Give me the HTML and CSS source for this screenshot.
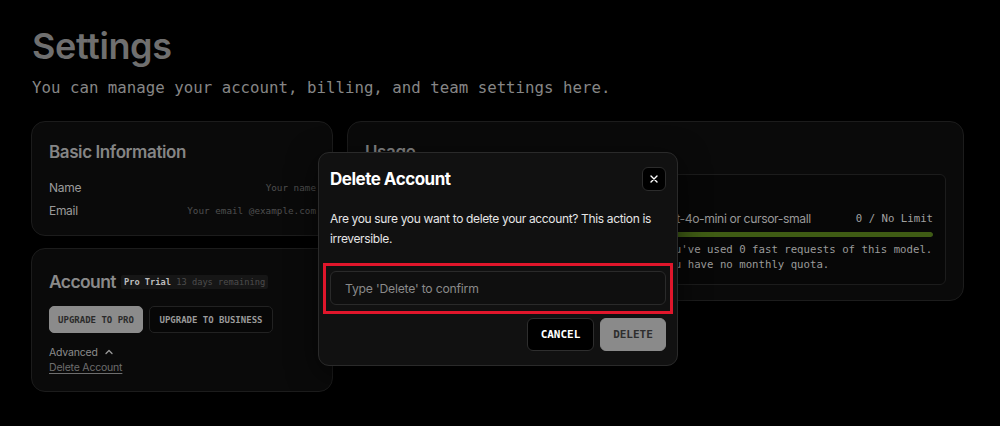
FILE: index.html
```html
<!DOCTYPE html>
<html lang="en">
<head>
<meta charset="utf-8">
<title>Settings</title>
<link rel="stylesheet" href="styles.css">
</head>
<body>
<main class="page">
  <header class="page-head">
    <h1 class="page-title">Settings</h1>
    <p class="page-sub">You can manage your account, billing, and team settings here.</p>
  </header>

  <div class="layout">
    <div class="col-left">
      <section class="card card-basic">
        <h2 class="card-title">Basic Information</h2>
        <div class="field-row">
          <span class="field-label">Name</span>
          <span class="field-value">Your name</span>
        </div>
        <div class="field-row">
          <span class="field-label">Email</span>
          <span class="field-value">Your email @example.com</span>
        </div>
      </section>

      <section class="card card-account">
        <div class="account-head">
          <h2 class="card-title account-title">Account</h2>
          <span class="badge"><b>Pro Trial</b> 13 days remaining</span>
        </div>
        <div class="btn-row">
          <button class="btn btn-light">UPGRADE TO PRO</button>
          <button class="btn btn-dark">UPGRADE TO BUSINESS</button>
        </div>
        <div class="advanced">
          <span>Advanced</span>
          <svg width="10" height="10" viewBox="0 0 10 10"><path d="M2 6.5 L5 3.5 L8 6.5" fill="none" stroke="#9a9a9a" stroke-width="1.3" stroke-linecap="round" stroke-linejoin="round"/></svg>
        </div>
        <a class="delete-link" href="#">Delete Account</a>
      </section>
    </div>

    <section class="card card-usage">
      <h2 class="card-title">Usage</h2>
      <div class="usage-box">
        <div class="usage-col">
          <div class="usage-row">
            <span class="usage-name">Premium models</span>
            <span class="usage-count">0 / 50</span>
          </div>
          <div class="bar"><div class="bar-fill" style="width:0%"></div></div>
          <p class="usage-note">You've used 0 requests out of your 50 fast requests.</p>
        </div>
        <div class="usage-col">
          <div class="usage-row">
            <span class="usage-name">gpt-4o-mini or cursor-small</span>
            <span class="usage-count">0 / No Limit</span>
          </div>
          <div class="bar"><div class="bar-fill" style="width:100%"></div></div>
          <p class="usage-note">You've used 0 fast requests of this model.<br>You have no monthly quota.</p>
        </div>
      </div>
    </section>
  </div>
</main>

<div class="overlay">
  <div class="modal" role="dialog" aria-labelledby="dlg-title">
    <div class="modal-head">
      <h3 id="dlg-title" class="modal-title">Delete Account</h3>
      <button class="close-btn" aria-label="Close">
        <svg width="10" height="10" viewBox="0 0 10 10"><path d="M2 2 L8 8 M8 2 L2 8" stroke="#ffffff" stroke-width="1.4" stroke-linecap="round"/></svg>
      </button>
    </div>
    <p class="modal-text">Are you sure you want to delete your account? This action is irreversible.</p>
    <div class="highlight">
      <input class="confirm-input" type="text" placeholder="Type 'Delete' to confirm">
    </div>
    <div class="modal-actions">
      <button class="mbtn mbtn-cancel">CANCEL</button>
      <button class="mbtn mbtn-delete">DELETE</button>
    </div>
  </div>
</div>
</body>
</html>
```

FILE: styles.css
```css
* { box-sizing: border-box; }

html, body {
  margin: 0;
  padding: 0;
  background: #000;
  height: 100%;
}

body {
  font-family: Inter, "Liberation Sans", sans-serif;
  color: #cfcfcf;
  overflow: hidden;
  position: relative;
}

.page {
  padding: 23px 36px 0 31px;
}

.page-head {
  padding-left: 1px;
}

.page-title {
  margin: 0;
  font-size: 36px;
  line-height: 46px;
  font-weight: 600;
  letter-spacing: -0.4px;
  color: #6f6f6f;
}

.page-sub {
  margin: 9px 0 0;
  font-family: "DejaVu Sans Mono", "Liberation Mono", monospace;
  font-size: 15.75px;
  line-height: 20px;
  color: #868686;
}

.layout {
  display: grid;
  grid-template-columns: 302px 1fr;
  gap: 14px;
  margin-top: 23px;
  align-items: start;
}

.col-left {
  display: flex;
  flex-direction: column;
  gap: 12px;
}

.card {
  background: #0a0a0a;
  border: 1px solid #1c1c1c;
  border-radius: 14px;
}

.card-title {
  margin: 0;
  font-size: 17px;
  line-height: 22px;
  font-weight: 600;
  letter-spacing: -0.4px;
  color: #858585;
}

.card-basic {
  padding: 19px 16px 16px 17px;
}

.field-row {
  display: flex;
  justify-content: space-between;
  align-items: center;
  height: 18px;
  margin-top: 5px;
}

.card-basic .card-title + .field-row {
  margin-top: 15px;
}

.field-label {
  font-size: 12px;
  color: #9a9a9a;
  letter-spacing: -0.3px;
}

.field-value {
  font-family: "DejaVu Sans Mono", "Liberation Mono", monospace;
  font-size: 9.3px;
  color: #4f4f4f;
}

.card-account {
  padding: 20px 16px 15px 17px;
}

.account-head {
  display: flex;
  align-items: center;
  gap: 5px;
  height: 26px;
}

.account-title {
  font-size: 17.5px;
  letter-spacing: -0.6px;
  color: #8a8a8a;
}

.badge {
  font-family: "DejaVu Sans Mono", "Liberation Mono", monospace;
  font-size: 8.7px;
  line-height: 14px;
  padding: 0 3px;
  background: #161616;
  color: #4d4d4d;
  border-radius: 2px;
}

.badge b {
  color: #bdbdbd;
  font-weight: 700;
}

.btn-row {
  display: flex;
  gap: 6px;
  margin-top: 11px;
}

.btn {
  height: 27px;
  padding: 0;
  border-radius: 5px;
  font-family: "DejaVu Sans Mono", "Liberation Mono", monospace;
  font-size: 9px;
  font-weight: 700;
  white-space: nowrap;
  cursor: pointer;
}

.btn-light {
  background: #8b8b8b;
  color: #2a2a2a;
  border: 1px solid #8b8b8b;
  width: 94px;
}

.btn-dark {
  background: #070707;
  color: #9a9a9a;
  border: 1px solid #222;
  width: 124px;
}

.advanced {
  display: flex;
  align-items: center;
  gap: 6px;
  margin-top: 11px;
  height: 16px;
  font-size: 10.5px;
  color: #8c8c8c;
  letter-spacing: -0.2px;
}

.delete-link {
  display: block;
  width: fit-content;
  line-height: 16px;
  font-size: 10.5px;
  color: #6e6e6e;
  letter-spacing: -0.2px;
  text-decoration: underline;
  text-underline-offset: 2px;
}

.card-usage {
  padding: 19px 17px 15px 17px;
}

.usage-box {
  margin-top: 11px;
  border: 1px solid #1c1c1c;
  border-radius: 6px;
  background: #070707;
  padding: 34px 12px 12px 13px;
  display: grid;
  grid-template-columns: 1fr 1fr;
  gap: 12px;
}

.usage-row {
  display: flex;
  justify-content: space-between;
  align-items: center;
  height: 18px;
}

.usage-name {
  font-size: 12.2px;
  color: #999;
  letter-spacing: -0.4px;
}

.usage-count {
  font-family: "DejaVu Sans Mono", "Liberation Mono", monospace;
  font-size: 10.7px;
  color: #a0a0a0;
}

.bar {
  margin-top: 5px;
  height: 5px;
  border-radius: 3px;
  background: #1c1c1c;
  overflow: hidden;
}

.bar-fill {
  height: 100%;
  background: #3f5c14;
  border-radius: 3px;
}

.usage-note {
  margin: 5px 0 0;
  font-family: "DejaVu Sans Mono", "Liberation Mono", monospace;
  font-size: 10.7px;
  line-height: 15px;
  color: #9a9a9a;
}

/* Modal */
.overlay {
  position: absolute;
  inset: 0;
}

.modal {
  position: absolute;
  left: 318px;
  top: 152px;
  width: 360px;
  background: #111111;
  border: 1px solid #2a2a2a;
  border-radius: 11px;
  padding: 14px 11px 14px 11px;
  box-shadow: 0 8px 30px rgba(0,0,0,0.6);
}

.modal-head {
  display: flex;
  justify-content: space-between;
  align-items: center;
  height: 24px;
}

.modal-title {
  margin: 0;
  font-size: 17px;
  font-weight: 700;
  letter-spacing: -0.5px;
  color: #ffffff;
}

.close-btn {
  width: 24px;
  height: 24px;
  padding: 0;
  border-radius: 6px;
  border: 1px solid #2c2c2c;
  background: #000;
  display: flex;
  align-items: center;
  justify-content: center;
  cursor: pointer;
}

.modal-text {
  margin: 18px 0 0;
  font-size: 12px;
  line-height: 20px;
  color: #e6e6e6;
  letter-spacing: -0.35px;
}

.highlight {
  margin: 14px -7px 0;
  border: 3px solid #e0162b;
  padding: 5px 4px 6px;
}

.confirm-input {
  display: block;
  width: 100%;
  height: 34px;
  background: #0f0f0f;
  border: 1px solid #2a2a2a;
  border-radius: 6px;
  padding: 0 14px;
  font-family: Inter, "Liberation Sans", sans-serif;
  font-size: 12.2px;
  letter-spacing: -0.2px;
  color: #ddd;
  outline: none;
}

.confirm-input::placeholder {
  color: #8a8a8a;
}

.modal-actions {
  display: flex;
  justify-content: flex-end;
  gap: 6px;
  margin-top: 4px;
}

.mbtn {
  height: 33px;
  border-radius: 6px;
  font-family: "DejaVu Sans Mono", "Liberation Mono", monospace;
  font-size: 11px;
  font-weight: 700;
  cursor: pointer;
}

.mbtn-cancel {
  width: 67px;
  background: #000;
  color: #fff;
  border: 1px solid #2e2e2e;
}

.mbtn-delete {
  width: 66px;
  background: #8a8a8a;
  color: #2e2e2e;
  border: 1px solid #8a8a8a;
}
```
